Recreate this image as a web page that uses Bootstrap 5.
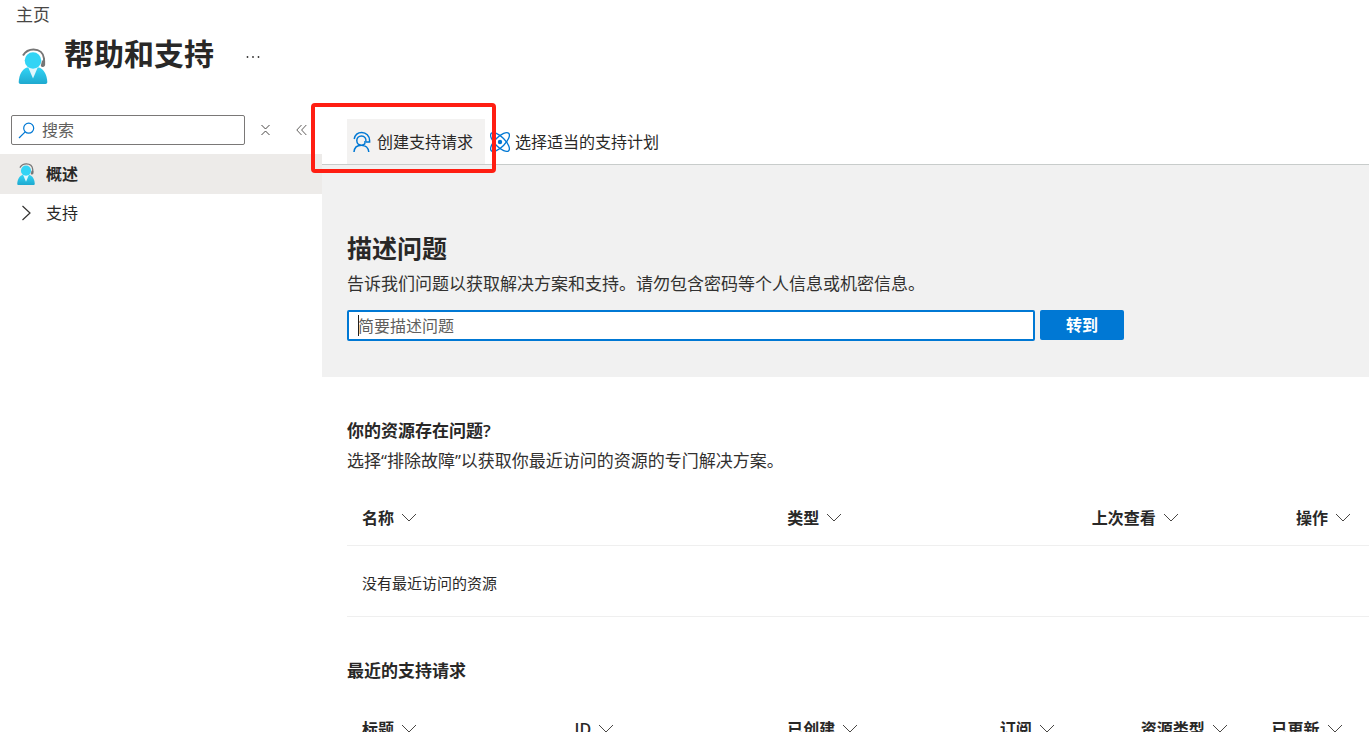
<!DOCTYPE html>
<html lang="zh-CN">
<head>
<meta charset="utf-8">
<meta name="viewport" content="width=device-width, initial-scale=1">
<title>帮助和支持</title>
<link href="https://cdn.jsdelivr.net/npm/bootstrap@5.3.0/dist/css/bootstrap.min.css" rel="stylesheet">
<style>
  body { font-family: "Open Sans", "Noto Sans CJK SC", sans-serif; font-size: 16px; line-height: 24px; color: #292827; }
  .crumb { font-size: 17px; color: #484644; padding: 3px 16px 1px; }
  .page-head { padding: 6px 18px 0; height: 75px; }
  .page-title { font-size: 30px; line-height: 40px; font-weight: 600; margin-left: 16px; }
  .page-icon { margin-top: 14px; }
  .more-btn { margin: 19px 0 0 31px; line-height: 0; }
  .side-pane { width: 322px; padding-top: 12px; }
  .filter { height: 39px; padding: 0 15px 0 11px; }
  .filter-box { width: 234px; height: 30px; border: 1px solid #7a7877; border-radius: 2px; padding: 0 6px; gap: 7px; }
  .filter-box input { font-size: 16px; line-height: 24px; }
  .filter-box input::placeholder, .ask-input::placeholder { color: #605e5c; opacity: 1; }
  .filter-box input:focus { outline: 0; }
  .filter-btn { height: 30px; }
  .side-link { height: 38px; padding: 0 16px; color: inherit; text-decoration: none; gap: 10px; }
  .side-link.active { height: 40px; background: #edebe9; font-weight: 600; }
  .side-link svg { width: 20px; }
  .command-bar { height: 62px; padding: 16px 0 0 25px; border-bottom: 1px solid #c8cccb; }
  .command { height: 45px; padding: 0 12px 0 5px; gap: 5px; color: #292827; background: none; }
  .command.active { background: #f3f2f1; }
  .highlight-box { position: absolute; inset: -16px -11px -9px -36px; border: 4px solid #ff1e12; border-radius: 4px; z-index: 2; pointer-events: none; }
  .ask { background: #f1f1f1; padding: 67px 25px 36px; }
  .ask h2 { font-size: 25px; line-height: 32px; font-weight: 600; margin: 0 0 8px; }
  .body-text { font-size: 17px; line-height: 24px; margin: 0; color: #323130; }
  .ask-row { margin-top: 14px; gap: 5px; max-width: 777px; }
  .ask-input { width: 100%; height: 31px; border: 2px solid #0078d4; border-radius: 2px; padding: 0 9px; background: #fff; }
  .ask-input:focus { outline: 0; }
  .caret-line { position: absolute; left: 11px; top: 5px; width: 1px; height: 21px; background: #201f1e; }
  .go-btn { width: 84px; height: 30px; background: #0078d4; border-radius: 2px; font-weight: 600; }
  .block { padding: 41px 0 0 25px; }
  .block h3 { font-size: 17px; line-height: 26px; font-weight: 600; margin: 0 0 5px; }
  .grid-table { table-layout: fixed; margin: 18px 0 0; --bs-table-color: #292827; --bs-table-bg: transparent; border-color: #efefef; }
  .grid-table th { padding: 15px; font-weight: 600; white-space: nowrap; line-height: 24px; border-bottom-width: 1px; }
  .grid-table td { padding: 25px 15px 21px; font-size: 15px; line-height: 24px; border-bottom-width: 1px; }
  .sort { font-weight: inherit; color: inherit; gap: 7px; line-height: 24px; }
</style>
</head>
<body class="bg-white">
<svg width="0" height="0" class="position-absolute" aria-hidden="true">
  <defs>
    <linearGradient id="torso" x1="0" y1="0" x2="0" y2="1"><stop offset="0" stop-color="#32d4f5"/><stop offset="1" stop-color="#1fa9cf"/></linearGradient>
    <symbol id="agent" viewBox="0 0 30 36">
      <path d="M5 7.500C8 2.500 12 1.500 15.500 1.500C21.500 1.500 25.500 5 26 10.500V16" fill="none" stroke="#767676" stroke-width="2"/>
      <path d="M24 12.500h3.100v4.200c0 1.600-1.400 2.300-3.300 2.300l-1-1.200z" fill="#767676"/>
      <path d="M9 19.500H21C26 21 29 27 29.300 34C29.300 35.300 28.500 36 27.500 36H2.500C1.500 36 .7 35.300.7 34C1 27 4 21 9 19.500Z" fill="url(#torso)"/>
      <path d="M10.300 19.500H19.700L15 30.500Z" fill="#e2f7fd"/>
      <circle cx="15" cy="12.500" r="8.300" fill="#32d4f5"/>
    </symbol>
    <symbol id="chev" viewBox="0 0 16 10"><path d="M1 1l7 7l7-7" fill="none" stroke="#484644" stroke-width="1"/></symbol>
  </defs>
</svg>

<div class="vh-100 d-flex flex-column overflow-hidden">
  <nav class="crumb" aria-label="breadcrumb"><a href="#" class="text-reset text-decoration-none">主页</a></nav>
  <header class="page-head d-flex align-items-start flex-shrink-0">
    <svg class="page-icon" width="30" height="36" aria-hidden="true"><use href="#agent"/></svg>
    <h1 class="page-title mb-0">帮助和支持</h1>
    <button type="button" class="more-btn btn p-0 border-0" aria-label="更多">
      <svg width="16" height="8" fill="#323130"><circle cx="2.500" cy="4" r=".9"/><circle cx="8" cy="4" r=".9"/><circle cx="13.500" cy="4" r=".9"/></svg>
    </button>
  </header>

  <div class="d-flex flex-grow-1">
    <aside class="side-pane flex-shrink-0">
      <div class="filter d-flex align-items-start">
        <label class="filter-box d-flex align-items-center">
          <svg class="flex-shrink-0" width="17" height="17" viewBox="0 0 17 17" fill="none" stroke="#0078d4" stroke-width="1.200" aria-hidden="true"><circle cx="10.700" cy="6.200" r="5"/><path d="M7.200 9.800L1 16"/></svg>
          <input type="text" class="border-0 p-0 w-100 bg-transparent" placeholder="搜索" aria-label="搜索">
        </label>
        <button type="button" class="filter-btn btn border-0 p-0 ms-3 d-flex align-items-center" aria-label="全部折叠">
          <svg width="9" height="12" viewBox="0 0 9 12" fill="none" stroke="#484644"><path d="M.5 1l4 4l4-4M.5 11l4-4l4 4"/></svg>
        </button>
        <button type="button" class="filter-btn btn border-0 p-0 ms-auto d-flex align-items-center" aria-label="收起">
          <svg width="11" height="12" viewBox="0 0 11 12" fill="none" stroke="#605e5c"><path d="M5.500 1L.8 6l4.700 5M10.300 1L5.600 6l4.700 5"/></svg>
        </button>
      </div>
      <nav>
        <a href="#" class="side-link active d-flex align-items-center"><svg height="22" aria-hidden="true"><use href="#agent"/></svg>概述</a>
        <a href="#" class="side-link d-flex align-items-center"><svg height="16" viewBox="0 0 20 16" fill="none" stroke="#323130" stroke-width="1.200" aria-hidden="true"><path d="M6.500 1l7.500 7l-7.500 7"/></svg>支持</a>
      </nav>
    </aside>

    <main class="flex-grow-1" style="min-width:0">
      <div class="command-bar d-flex">
        <div class="position-relative">
          <button type="button" class="command active btn border-0 rounded-0 d-flex align-items-center">
            <svg width="20" height="22" viewBox="0 0 20 22" fill="none" stroke="#0078d4" stroke-width="1.500" aria-hidden="true"><path d="M2.200 8C3 4 6 1.500 9.800 1.500C14 1.500 17.600 5 17.600 9.500V11H12"/><path d="M13.900 10.500C14.500 7.500 12.500 5 9.500 5C6.700 5 4.800 7 4.800 9.600C4.800 12.200 6.800 14.200 9.400 14.200C11 14.200 12.400 13.500 13.300 12.200M2 21C2.300 17 5 14.200 9.400 14.200C13.500 14.200 16.500 17 16.800 21"/></svg>
            创建支持请求
          </button>
          <span class="highlight-box"></span>
        </div>
        <button type="button" class="command btn border-0 rounded-0 d-flex align-items-center">
          <svg width="20" height="22" viewBox="0 0 20 22" fill="none" stroke="#0078d4" stroke-width="1.300" aria-hidden="true"><ellipse cx="10" cy="11" rx="12.300" ry="5" transform="rotate(45 10 11)"/><ellipse cx="10" cy="11" rx="12.300" ry="5" transform="rotate(-45 10 11)"/><circle cx="10" cy="11" r="2.200" fill="#0078d4" stroke="none"/></svg>
          选择适当的支持计划
        </button>
      </div>

      <section class="ask">
        <h2>描述问题</h2>
        <p class="body-text">告诉我们问题以获取解决方案和支持。请勿包含密码等个人信息或机密信息。</p>
        <form class="ask-row d-flex">
          <div class="position-relative flex-grow-1">
            <input type="text" class="ask-input d-block" placeholder="简要描述问题" aria-label="简要描述问题">
            <span class="caret-line"></span>
          </div>
          <button type="button" class="go-btn btn text-white border-0 p-0">转到</button>
        </form>
      </section>

      <section class="block">
        <h3>你的资源存在问题?</h3>
        <p class="body-text">选择“排除故障”以获取你最近访问的资源的专门解决方案。</p>
        <table class="grid-table table">
          <colgroup><col style="width:41.6%"><col style="width:29.8%"><col style="width:20%"><col></colgroup>
          <thead><tr>
            <th scope="col"><button type="button" class="sort btn border-0 p-0 d-flex align-items-center">名称<svg width="16" height="10" aria-hidden="true"><use href="#chev"/></svg></button></th>
            <th scope="col"><button type="button" class="sort btn border-0 p-0 d-flex align-items-center">类型<svg width="16" height="10" aria-hidden="true"><use href="#chev"/></svg></button></th>
            <th scope="col"><button type="button" class="sort btn border-0 p-0 d-flex align-items-center">上次查看<svg width="16" height="10" aria-hidden="true"><use href="#chev"/></svg></button></th>
            <th scope="col"><button type="button" class="sort btn border-0 p-0 d-flex align-items-center">操作<svg width="16" height="10" aria-hidden="true"><use href="#chev"/></svg></button></th>
          </tr></thead>
          <tbody><tr><td colspan="4">没有最近访问的资源</td></tr></tbody>
        </table>
      </section>

      <section class="block">
        <h3>最近的支持请求</h3>
        <table class="grid-table table">
          <colgroup><col style="width:20.8%"><col style="width:20.8%"><col style="width:20.8%"><col style="width:13.8%"><col style="width:12.8%"><col></colgroup>
          <thead><tr>
            <th scope="col"><button type="button" class="sort btn border-0 p-0 d-flex align-items-center">标题<svg width="16" height="10" aria-hidden="true"><use href="#chev"/></svg></button></th>
            <th scope="col"><button type="button" class="sort btn border-0 p-0 d-flex align-items-center">ID<svg width="16" height="10" aria-hidden="true"><use href="#chev"/></svg></button></th>
            <th scope="col"><button type="button" class="sort btn border-0 p-0 d-flex align-items-center">已创建<svg width="16" height="10" aria-hidden="true"><use href="#chev"/></svg></button></th>
            <th scope="col"><button type="button" class="sort btn border-0 p-0 d-flex align-items-center">订阅<svg width="16" height="10" aria-hidden="true"><use href="#chev"/></svg></button></th>
            <th scope="col"><button type="button" class="sort btn border-0 p-0 d-flex align-items-center">资源类型<svg width="16" height="10" aria-hidden="true"><use href="#chev"/></svg></button></th>
            <th scope="col"><button type="button" class="sort btn border-0 p-0 d-flex align-items-center">已更新<svg width="16" height="10" aria-hidden="true"><use href="#chev"/></svg></button></th>
          </tr></thead>
        </table>
      </section>
    </main>
  </div>
</div>
<script src="https://cdn.jsdelivr.net/npm/bootstrap@5.3.0/dist/js/bootstrap.bundle.min.js"></script>
</body>
</html>
